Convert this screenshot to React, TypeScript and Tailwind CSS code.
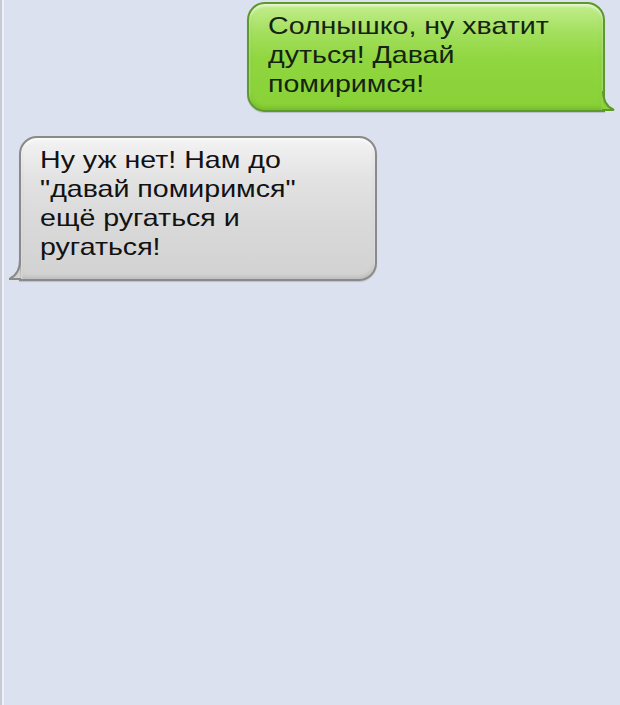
import React from 'react';

type Side = 'left' | 'right';

const Tail = ({ side, fill, stroke }: { side: Side; fill: string; stroke: string }) => {
  // little hook at the bottom corner of a bubble
  const path = side === 'right' ? 'M1 0 C1 10 5 16 12 19 L0 19' : 'M11 0 C11 10 7 16 0 19 L12 19';
  return (
    <svg
      width="13"
      height="21"
      viewBox="0 0 13 21"
      className={side === 'right' ? 'absolute -right-[12px] -bottom-[2px]' : 'absolute -left-[12px] -bottom-[2px]'}
    >
      <path d={path} fill={fill} />
      <path d={path} fill="none" stroke={stroke} strokeWidth="2" />
    </svg>
  );
};

const Bubble = ({ side, lines }: { side: Side; lines: string[] }) => {
  const green = side === 'right';
  return (
    <div
      className={
        green
          ? 'relative self-end mr-[15px] w-[358px] h-[110px] rounded-[18px] rounded-br-none border-2 border-[#5c9a2c] bg-[linear-gradient(to_bottom,#c2ee8e_0%,#a2df5c_28%,#90d640_52%,#88d136_100%)] shadow-[inset_0_2px_3px_rgba(255,255,255,0.7),inset_0_-2px_4px_rgba(40,80,0,0.2),0_1px_1px_rgba(0,0,0,0.15)] pl-[19px] pt-[7px] text-[#142410]'
          : 'relative ml-[15px] mt-[24px] w-[358px] h-[145px] rounded-[18px] rounded-bl-none border-2 border-[#8a8a8a] bg-[linear-gradient(to_bottom,#f3f3f3_0%,#e2e2e2_30%,#d9d9d9_60%,#d2d2d2_100%)] shadow-[inset_0_2px_3px_rgba(255,255,255,0.8),inset_0_-2px_4px_rgba(0,0,0,0.12),0_1px_1px_rgba(0,0,0,0.15)] pl-[19px] pt-[7px] text-[#121212]'
      }
    >
      <div className="origin-left scale-x-[1.19] font-['Liberation_Sans',Arial,sans-serif] text-[24px] leading-[29px] whitespace-nowrap">
        {lines.map((l) => (
          <div key={l}>{l}</div>
        ))}
      </div>
      {green ? (
        <Tail side="right" fill="#88d136" stroke="#5c9a2c" />
      ) : (
        <Tail side="left" fill="#d2d2d2" stroke="#8a8a8a" />
      )}
    </div>
  );
};

export default function App() {
  return (
    <div className="w-full h-[705px] overflow-hidden bg-[#c6cbd6] pl-[2px]">
      <div className="h-full border-l-[2px] border-[#eef0f6] bg-[#dbe1ee] flex flex-col pt-[2px]">
        <Bubble side="right" lines={['Солнышко, ну хватит', 'дуться! Давай', 'помиримся!']} />
        <Bubble side="left" lines={['Ну уж нет! Нам до', '"давай помиримся"', 'ещё ругаться и', 'ругаться!']} />
      </div>
    </div>
  );
}
